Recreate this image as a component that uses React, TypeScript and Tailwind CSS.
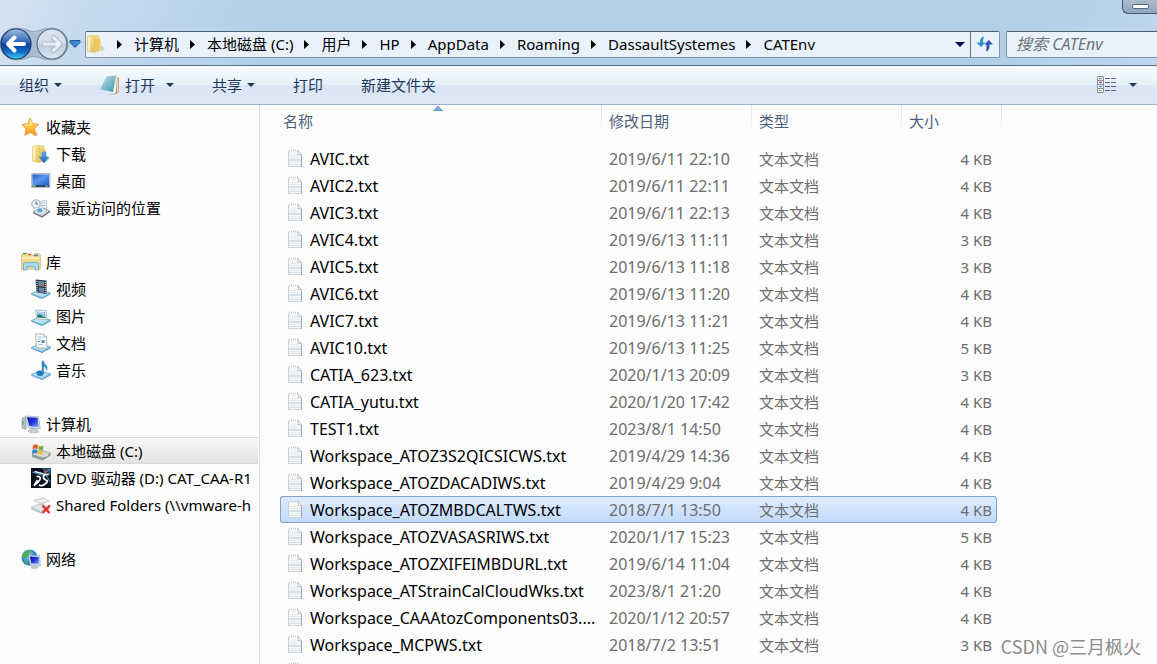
import { ReactNode } from "react"
import cn from "clsx"

interface IFile {
  name: string
  date: string
  size: string
  selected?: boolean
}

interface ITreeItem {
  label: string
  icon: ReactNode
  selected?: boolean
}

interface ITreeGroup extends ITreeItem {
  items: ITreeItem[]
}

const FILES: IFile[] = [
  { name: "AVIC.txt", date: "2019/6/11 22:10", size: "4 KB" },
  { name: "AVIC2.txt", date: "2019/6/11 22:11", size: "4 KB" },
  { name: "AVIC3.txt", date: "2019/6/11 22:13", size: "4 KB" },
  { name: "AVIC4.txt", date: "2019/6/13 11:11", size: "3 KB" },
  { name: "AVIC5.txt", date: "2019/6/13 11:18", size: "3 KB" },
  { name: "AVIC6.txt", date: "2019/6/13 11:20", size: "4 KB" },
  { name: "AVIC7.txt", date: "2019/6/13 11:21", size: "4 KB" },
  { name: "AVIC10.txt", date: "2019/6/13 11:25", size: "5 KB" },
  { name: "CATIA_623.txt", date: "2020/1/13 20:09", size: "3 KB" },
  { name: "CATIA_yutu.txt", date: "2020/1/20 17:42", size: "4 KB" },
  { name: "TEST1.txt", date: "2023/8/1 14:50", size: "4 KB" },
  { name: "Workspace_ATOZ3S2QICSICWS.txt", date: "2019/4/29 14:36", size: "4 KB" },
  { name: "Workspace_ATOZDACADIWS.txt", date: "2019/4/29 9:04", size: "4 KB" },
  { name: "Workspace_ATOZMBDCALTWS.txt", date: "2018/7/1 13:50", size: "4 KB", selected: true },
  { name: "Workspace_ATOZVASASRIWS.txt", date: "2020/1/17 15:23", size: "5 KB" },
  { name: "Workspace_ATOZXIFEIMBDURL.txt", date: "2019/6/14 11:04", size: "4 KB" },
  { name: "Workspace_ATStrainCalCloudWks.txt", date: "2023/8/1 21:20", size: "4 KB" },
  { name: "Workspace_CAAAtozComponents03....", date: "2020/1/12 20:57", size: "4 KB" },
  { name: "Workspace_MCPWS.txt", date: "2018/7/2 13:51", size: "3 KB" },
]

const PATH = ["计算机", "本地磁盘 (C:)", "用户", "HP", "AppData", "Roaming", "DassaultSystemes", "CATEnv"]

const Defs = () => (
  <svg className="absolute h-0 w-0" aria-hidden="true">
    <defs>
      <linearGradient id="back" x1="0" y1="0" x2="0" y2="1">
        <stop offset="0" stopColor="#9fbce0" />
        <stop offset="0.45" stopColor="#2a63b4" />
        <stop offset="0.5" stopColor="#0b3f98" />
        <stop offset="0.75" stopColor="#1268c4" />
        <stop offset="1" stopColor="#3fd2f8" />
      </linearGradient>
      <linearGradient id="forward" x1="0" y1="0" x2="0" y2="1">
        <stop offset="0" stopColor="#dbe5ef" />
        <stop offset="0.48" stopColor="#cfdbe8" />
        <stop offset="0.52" stopColor="#bccbdc" />
        <stop offset="1" stopColor="#dde9f5" />
      </linearGradient>
      <linearGradient id="folder" x1="0" y1="0" x2="1" y2="1">
        <stop offset="0" stopColor="#fff3b8" />
        <stop offset="1" stopColor="#e3bb4e" />
      </linearGradient>
      <linearGradient id="star" x1="0" y1="0" x2="0" y2="1">
        <stop offset="0" stopColor="#ffe36b" />
        <stop offset="0.6" stopColor="#fdbb35" />
        <stop offset="1" stopColor="#f08a1c" />
      </linearGradient>
      <linearGradient id="desktop" x1="0" y1="0" x2="1" y2="1">
        <stop offset="0" stopColor="#2456c4" />
        <stop offset="0.45" stopColor="#5c97f0" />
        <stop offset="1" stopColor="#2160d8" />
      </linearGradient>
      <linearGradient id="monitor" x1="0" y1="0" x2="1" y2="1">
        <stop offset="0" stopColor="#0812a8" />
        <stop offset="0.5" stopColor="#2236d8" />
        <stop offset="1" stopColor="#8fb4ff" />
      </linearGradient>
      <linearGradient id="tray" x1="0" y1="0" x2="1" y2="1">
        <stop offset="0" stopColor="#e5f5fd" />
        <stop offset="1" stopColor="#8ecbea" />
      </linearGradient>
      <linearGradient id="note" x1="0" y1="0" x2="1" y2="1">
        <stop offset="0" stopColor="#b8e4ec" />
        <stop offset="1" stopColor="#3f93ab" />
      </linearGradient>
      <linearGradient id="arrow" x1="0" y1="0" x2="0" y2="1">
        <stop offset="0" stopColor="#5fb0e8" />
        <stop offset="1" stopColor="#1c5fb4" />
      </linearGradient>
      <radialGradient id="globe" cx="0.4" cy="0.35" r="0.7">
        <stop offset="0" stopColor="#9be0f6" />
        <stop offset="0.6" stopColor="#2f8cc8" />
        <stop offset="1" stopColor="#175a98" />
      </radialGradient>
    </defs>
  </svg>
)

const Icon = ({ children }: { children: ReactNode }) => (
  <svg viewBox="0 0 20 20" className="h-5 w-5 shrink-0" aria-hidden="true">
    {children}
  </svg>
)

const Caret = () => (
  <svg viewBox="0 0 8 4" className="h-1 w-2 shrink-0" aria-hidden="true">
    <path d="M0 0h8L4 4z" fill="#1e395b" />
  </svg>
)

const FolderShape = () => (
  <>
    <path d="M15 11l4 4-4 3z" fill="#b9bdbd" opacity="0.6" />
    <path d="M7 1.500l6 .700v14.600L7 18z" fill="#f6dc84" stroke="#d9b95a" strokeWidth="0.500" />
    <path d="M1.500 2.500l5.500-1 1.500 1.500v15.500l-7-1.500z" fill="url(#folder)" stroke="#d9bd68" strokeWidth="0.600" />
    <path d="M9 4l5.500 1v11.500L9 18.500z" fill="#eccb66" />
    <path d="M3 3.500v13" stroke="#fffbe0" strokeWidth="1.200" />
  </>
)

const Tray = () => (
  <>
    <path d="M.5 14.500l8-3.500 11 3-8.500 5z" fill="url(#tray)" stroke="#4f9fc8" strokeWidth="0.800" />
    <path d="M.5 15l10.500 4.300 8.500-5v1L11 20 .5 15.800z" fill="#3f8fbd" />
  </>
)

const StarIcon = () => (
  <Icon>
    <path d="M14 14l4 3-3 2z" fill="#b8b8b8" opacity="0.5" />
    <path
      d="M9.200 1l2.600 5.800 6 .5-4.300 4.300 1.600 7.400-5.600-3.500-5.700 2.800 1.300-6.300L1 7.600l5.800-1z"
      fill="url(#star)"
      stroke="#e29a3a"
      strokeWidth="0.900"
      strokeLinejoin="round"
    />
    <path d="M9.200 2.800l1.700 4.800-7 .9" fill="none" stroke="#fff2a8" strokeWidth="1.200" />
  </Icon>
)

const DownloadIcon = () => (
  <Icon>
    <FolderShape />
    <path d="M11 8h4v5h3l-5 6-5-6h3z" fill="url(#arrow)" stroke="#3b8fd0" strokeWidth="0.600" />
  </Icon>
)

const DesktopIcon = () => (
  <Icon>
    <path d="M.5 2.500h18.500v14H.5z" fill="#c5cbd2" stroke="#9aa6b3" strokeWidth="0.600" />
    <path d="M1.500 3.500h16.500v10.500H1.500z" fill="url(#desktop)" />
    <path d="M1.500 14h16.500v2H1.500z" fill="#2e4258" />
    <path d="M2 14h2.500v2H2z" fill="#55c070" />
    <path d="M14 15h3" stroke="#9fc0e8" />
  </Icon>
)

const RecentIcon = () => (
  <Icon>
    <path d="M7 3.500l8-1 1 8-8 2z" fill="#f3f6f8" stroke="#a8b4be" strokeWidth="0.700" />
    <path d="M10 5h4M10 7.500h4" stroke="#a3b8c8" />
    <circle cx="5" cy="6" r="4.200" fill="#e8eff4" stroke="#98a8b5" />
    <path d="M5 3.500V6h2" fill="none" stroke="#58748a" />
    <path d="M2 14l8-5 9 4-8 5.500z" fill="#d0d5d9" stroke="#7b858d" strokeWidth="0.700" />
    <path d="M5 10.500l6-1 1.500 5-6 .8z" fill="#59a9d0" stroke="#f2f6f8" />
    <path d="M2 14.500l9 4.500 8-5.500" fill="none" stroke="#6d767e" strokeWidth="1.200" />
  </Icon>
)

const LibraryIcon = () => (
  <Icon>
    <path d="M.7 3l1-1.500h5L8 3h5l1-1.500h3.500L19.300 3v14H.7z" fill="#f4dc8c" stroke="#c9a953" strokeWidth="0.700" />
    <path d="M2 1.500h3" stroke="#3caa4c" strokeWidth="1.500" />
    <path d="M7 2.500h3" stroke="#d8452c" strokeWidth="1.300" />
    <path d="M13 3.500h4" stroke="#3587d0" strokeWidth="1.500" />
    <path d="M1.500 6h17" stroke="#fff6cc" strokeWidth="1.500" />
    <path
      d="M2.500 18v-5.500q0-2 2-2h11q2 0 2 2V18h-3.500v-3.500H6V18z"
      fill="#a9dcf2"
      stroke="#5ba6cb"
      strokeWidth="0.800"
    />
  </Icon>
)

const VideoIcon = () => (
  <Icon>
    <Tray />
    <path d="M4.500 0.500l11 1v13.500l-10-1.500z" fill="#3a4047" />
    <path d="M7.500 2l5.500.5v5l-5.500-.5z" fill="#4e93cc" />
    <path d="M8 8.500l5 .5v5l-5-.800z" fill="#458bc4" />
    <path d="M8.500 6l2-2.500L13 6v1.500z" fill="#d0632f" />
    <path d="M8.500 12l2-2 2 3z" fill="#c05a35" />
    <path d="M6 2v11M14.300 3v11" stroke="#e6e9ec" strokeWidth="0.900" strokeDasharray="1 1" />
  </Icon>
)

const PictureIcon = () => (
  <Icon>
    <Tray />
    <path d="M4.500 4l10.500.5 1 9-10.500-.5z" fill="#f4f7f9" stroke="#9fabb5" strokeWidth="0.700" />
    <path d="M6 5.500l8 .4.600 6-8-.3z" fill="#7dbbe6" />
    <path d="M6.500 11.500l-.2-2.500q3-1 4.500 1t3.800.5v1.500z" fill="#24705c" />
    <path d="M7 7q3-1 6 .5" stroke="#cfeaf8" fill="none" />
  </Icon>
)

const DocumentIcon = () => (
  <Icon>
    <Tray />
    <path d="M4.500 1h8l3 3 .5 11.500-10.500-1z" fill="#fafbfc" stroke="#9ba8b3" strokeWidth="0.800" />
    <path d="M12.500 1v3h3" fill="#d5dde3" stroke="#9ba8b3" strokeWidth="0.600" />
    <path d="M6.500 4h4M7 6h3M7 11.500h5" stroke="#a9b6c0" strokeWidth="0.800" />
    <path d="M10.500 7h3v3h-3z" fill="#5a8fb8" />
    <path d="M7 8.500h2" stroke="#7d93a4" />
  </Icon>
)

const MusicIcon = () => (
  <Icon>
    <Tray />
    <ellipse cx="9" cy="13.300" rx="3.500" ry="2.700" fill="#2178bc" />
    <path d="M11 13.500V1h1.500q.5 3 3 4.500 1.500 2 0 5 .3-3-3-4.500v7.500z" fill="#2f8bce" stroke="#2272ae" strokeWidth="0.400" />
  </Icon>
)

const ComputerIcon = () => (
  <Icon>
    <path d="M1 4l4-1.500v13L1 14z" fill="#b8c1c9" stroke="#8c969e" strokeWidth="0.600" />
    <path d="M2 7v4" stroke="#5cae52" strokeWidth="1.200" />
    <path d="M10 14l5 1 3 3-7 1-4-2z" fill="#c9cfd4" stroke="#9aa2a8" strokeWidth="0.500" />
    <path d="M4.500 2l13 .7 1.800 12.300-12-1.500z" fill="#d8e0e8" stroke="#98a4b2" strokeWidth="0.600" />
    <path d="M6 3.200l10.500.6 1.300 9.500-9.500-1.200z" fill="url(#monitor)" />
  </Icon>
)

const DriveIcon = () => (
  <Icon>
    <path d="M1 13.500l8-4.500 10.500 3-7.500 5z" fill="#d5dadc" stroke="#8a9295" strokeWidth="0.700" />
    <path d="M1 13.500v2.500l10.500 3.500 8-5V12l-7.500 5z" fill="#929b9d" />
    <path d="M14 15.500l3-1.500" stroke="#dff0d2" strokeWidth="1.200" />
    <path d="M2 4.500q2.500-1.800 5-.3L6.500 8Q4 6.800 1.500 8.300z" fill="#e55a26" />
    <path d="M7.800 4.700q2 1.300 4.700 0L12 8.500q-2.300 1.200-4.700-.2z" fill="#6db43c" />
    <path d="M1.400 9q2.500-1.500 5-.3L6 12.500q-2.500-1-5 .3z" fill="#3386cc" />
    <path d="M7.200 9.300q2.300 1.300 4.700.2l-.500 3.800q-2.300 1-4.700-.300z" fill="#f4c02e" />
  </Icon>
)

const DiscIcon = () => (
  <Icon>
    <path d="M0 0h20v20H0z" fill="#0b1020" />
    <path d="M10 0h10v7z" fill="#2c4a70" />
    <path d="M1 4l10 3 8-6M14 5l5 9" stroke="#4c84b8" strokeWidth="1.200" fill="none" />
    <path d="M3.500 3.500L13 6" stroke="#dff2ff" strokeWidth="1.500" />
    <path d="M5.500 8.500q5-.5 3.500 3T3 17.500l3.500-5.500" stroke="#fff" strokeWidth="1.700" fill="none" />
    <path d="M18 6.500q-5-.5-5.500 2t2.500 3.500-1 4-6 .8" stroke="#fff" strokeWidth="1.700" fill="none" />
    <path d="M13 2l2 3" stroke="#d74a3a" strokeWidth="1.500" />
  </Icon>
)

const SharedIcon = () => (
  <Icon>
    <path d="M3 5.500l9-2.500 6 3-8 3z" fill="#eceeef" stroke="#b3b8bb" strokeWidth="0.700" />
    <path d="M8 9l5-1.500v4L9 13z" fill="#c8cccf" />
    <path d="M.5 12.500l8-3.500 10 3-8 4.500z" fill="#e4e7e8" stroke="#a7adb0" strokeWidth="0.700" />
    <path d="M.5 13l10 4 8-4.500v1.500l-8 4.500-10-4z" fill="#b5babd" />
    <path d="M11.500 10.500l7 7.500M19 10.500L11.500 18" stroke="#dc3030" strokeWidth="2.400" />
  </Icon>
)

const NetworkIcon = () => (
  <Icon>
    <circle cx="8.500" cy="8.500" r="8" fill="url(#globe)" />
    <path d="M3 3q5-3 7-1L8 5 6 9 2 8.500q-1-3 1-5.500z" fill="#4bb04f" />
    <path d="M3 11l3 1 1 3.500q-3-1-4-4.500z" fill="#59b559" />
    <path d="M13 16l3 1 1 2-5 .7-2.500-1z" fill="#c8ced4" stroke="#9aa2a8" strokeWidth="0.400" />
    <path d="M7.500 6l11 .7.800 10-10.500-1z" fill="#dbe3ea" stroke="#8c9aaa" strokeWidth="0.600" />
    <path d="M9 7.400l8.500.5.600 7.200-8-.8z" fill="url(#monitor)" />
  </Icon>
)

const FileIcon = () => (
  <svg viewBox="0 0 16 19" className="h-[19px] w-4 shrink-0" aria-hidden="true">
    <path d="M1 2h10.500L15 5.500V18H1z" fill="#f5f7f8" />
    <path d="M1.500 2v16M1.500 17.500H14" stroke="#cdd1d4" />
    <path d="M14.500 6v12" stroke="#a4a9ad" />
    <path d="M11 1.500l3.500 4H11z" fill="#fdfdfd" stroke="#b2b7ba" strokeWidth="0.800" />
    <path d="M2 1.500h9" stroke="#c3c8cb" strokeWidth="1.500" strokeDasharray="1 1" />
    <path d="M3 6.500h8M3 8.500h11" stroke="#e4ecf1" />
    <path d="M2 10.500h12M2 11.500h12M2 15.500h12" stroke="#d3e0e9" />
    <path d="M2 13.500h12" stroke="#e4ecf1" />
  </svg>
)

const NotepadIcon = () => (
  <Icon>
    <path d="M14 18l5-1-3 2.500H7z" fill="#a9adab" opacity="0.600" />
    <path d="M16 2l3 1-.5 14-3 1.500z" fill="#b99458" />
    <path d="M6 2.500L17 1.500l-1 15-2 2L0 15z" fill="#f3f6f3" />
    <path d="M6 2.500l10-1-3 15.500L0 14.500z" fill="url(#note)" />
    <path d="M6.500 2L17 1" stroke="#7a8a8e" strokeWidth="1.200" strokeDasharray="1 1" />
    <path d="M17.500 3.500v13" stroke="#efe2c4" strokeWidth="0.800" />
  </Icon>
)

const ViewIcon = () => (
  <svg viewBox="0 0 20 18" className="h-[18px] w-5" aria-hidden="true">
    <path d="M.5 .5h6v16h-6zM.5 4.500h6M.5 8.500h6M.5 12.500h6" fill="#fff" stroke="#8294ab" />
    <path d="M2 2.500h3" stroke="#6fa080" strokeWidth="1.500" />
    <path d="M2 6.500h3" stroke="#e0453a" strokeWidth="1.500" />
    <path d="M2 10.500h3" stroke="#5580d8" strokeWidth="1.500" />
    <path d="M2 14.500h3" stroke="#98c83c" strokeWidth="1.500" />
    <path d="M8 2.500h5M14 2.500h5M8 6.500h5M14 6.500h5M8 10.500h5M14 10.500h5M8 14.500h5M14 14.500h5" stroke="#566a84" />
  </svg>
)

const RefreshIcon = () => (
  <svg viewBox="0 0 18 18" className="h-[18px] w-[18px]" aria-hidden="true">
    <path d="M4 7.500Q4 2 8 1.500q-1 2-1 6h2.500L5 12 .5 7.500z" fill="#2f8ed0" />
    <path d="M13.500 9.500q.5 6-3.500 7 .800-2 .500-7H8.500L12.800 5 17 9.500z" fill="#2a55ae" />
  </svg>
)

const TREE: ITreeGroup[] = [
  {
    label: "收藏夹",
    icon: <StarIcon />,
    items: [
      { label: "下载", icon: <DownloadIcon /> },
      { label: "桌面", icon: <DesktopIcon /> },
      { label: "最近访问的位置", icon: <RecentIcon /> },
    ],
  },
  {
    label: "库",
    icon: <LibraryIcon />,
    items: [
      { label: "视频", icon: <VideoIcon /> },
      { label: "图片", icon: <PictureIcon /> },
      { label: "文档", icon: <DocumentIcon /> },
      { label: "音乐", icon: <MusicIcon /> },
    ],
  },
  {
    label: "计算机",
    icon: <ComputerIcon />,
    items: [
      { label: "本地磁盘 (C:)", icon: <DriveIcon />, selected: true },
      { label: "DVD 驱动器 (D:) CAT_CAA-R1", icon: <DiscIcon /> },
      { label: "Shared Folders (\\\\vmware-h", icon: <SharedIcon /> },
    ],
  },
  { label: "网络", icon: <NetworkIcon />, items: [] },
]

const NavButtons = () => (
  <div className="relative flex w-[85px] shrink-0 items-center">
    <svg viewBox="0 0 70 34" className="absolute left-0 h-[34px] w-[70px]" aria-hidden="true">
      <path
        d="M16 1Q24 1 30 4q4 1 8 0 6-3 14-3a16 16 0 010 32q-8 0-14-3-4-1-8 0-6 3-14 3A16 16 0 0116 1z"
        fill="#a9bdd2"
        stroke="#8ea3b8"
      />
    </svg>
    <button type="button" aria-label="后退" className="relative h-[34px] w-[34px]">
      <svg viewBox="0 0 34 34" aria-hidden="true">
        <circle cx="16" cy="17" r="15" fill="url(#back)" stroke="#1d3d66" strokeWidth="1.200" />
        <path d="M8 17h16M14.500 10.500L8 17l6.500 6.500" fill="none" stroke="#fff" strokeWidth="4" strokeLinejoin="round" strokeLinecap="round" />
      </svg>
    </button>
    <button type="button" aria-label="前进" className="relative h-[34px] w-[34px]">
      <svg viewBox="0 0 34 34" aria-hidden="true">
        <circle cx="18" cy="17" r="15" fill="url(#forward)" stroke="#5d6b7a" strokeWidth="1.200" />
        <path d="M10 17h16M19.500 10.500L26 17l-6.500 6.500" fill="none" stroke="#aebccb" strokeWidth="5" strokeLinejoin="round" strokeLinecap="round" />
        <path d="M10 17h16M19.500 10.500L26 17l-6.500 6.500" fill="none" stroke="#e8eef5" strokeWidth="3" strokeLinejoin="round" strokeLinecap="round" />
      </svg>
    </button>
    <button type="button" aria-label="最近的页面" className="ml-px">
      <svg viewBox="0 0 12 8" className="h-2 w-3" aria-hidden="true">
        <path d="M1 .5h10v2L6 7.500l-5-5z" fill="#3f8bd0" stroke="#1f4f8c" strokeWidth="0.900" />
      </svg>
    </button>
  </div>
)

const AddressBar = () => (
  <div className="flex h-[27px] min-w-0 flex-1 rounded-xs border border-[#8194a8] border-t-[#4e5f70] bg-[#e9f2fa]">
    <nav aria-label="地址" className="flex min-w-0 flex-1 items-center overflow-hidden">
      <Icon>
        <FolderShape />
      </Icon>
      {PATH.map((part) => (
        <div key={part} className="flex shrink-0 items-center">
          <svg viewBox="0 0 5 9" className="mr-3 ml-[11px] h-[9px] w-[5px]" aria-hidden="true">
            <path d="M0 0l5 4.500L0 9z" fill="#000" />
          </svg>
          <a href="#" className="text-black">
            {part}
          </a>
        </div>
      ))}
    </nav>
    <button type="button" aria-label="以前的位置" className="w-5 shrink-0">
      <svg viewBox="0 0 10 5" className="mx-auto h-[5px] w-[10px]" aria-hidden="true">
        <path d="M0 0h10L5 5z" fill="#000050" />
      </svg>
    </button>
    <button
      type="button"
      aria-label="刷新"
      className="flex w-[29px] shrink-0 items-center justify-center border-l border-[#5f7081]"
    >
      <RefreshIcon />
    </button>
  </div>
)

const ToolButton = ({ children }: { children: ReactNode }) => (
  <button type="button" className="flex h-full items-center gap-[5px] text-[#1e395b]">
    {children}
  </button>
)

const Toolbar = () => (
  <div className="flex h-[40px] shrink-0 items-center border-t border-b border-t-[#5c7188] border-b-[#9eb0cb] bg-[linear-gradient(#f7fbff,#e6f0fa_50%,#dbe5f3_50%,#dde7f5)] pr-5 pl-[19px]">
    <div className="flex flex-1 items-center gap-[38px]">
      <ToolButton>
        组织
        <Caret />
      </ToolButton>
      <ToolButton>
        <NotepadIcon />
        打开
        <span className="ml-1.5">
          <Caret />
        </span>
      </ToolButton>
      <ToolButton>
        共享
        <Caret />
      </ToolButton>
      <ToolButton>打印</ToolButton>
      <ToolButton>新建文件夹</ToolButton>
    </div>
    <button type="button" aria-label="更改您的视图" className="flex items-center gap-3">
      <ViewIcon />
      <Caret />
    </button>
  </div>
)

const TreeRow = ({ label, icon, selected, nested }: ITreeItem & { nested?: boolean }) => (
  <a
    href="#"
    className={cn("flex h-[27px] items-center gap-[5px] overflow-hidden border-y whitespace-nowrap text-black", {
      "pl-[31px]": nested,
      "pl-[21px]": !nested,
      "border-[#d9d9d9] bg-linear-to-b from-[#f7f7f7] to-[#e4e4e4]": selected,
      "border-transparent": !selected,
    })}
  >
    {icon}
    <span>{label}</span>
  </a>
)

const Sidebar = () => (
  <aside className="flex w-[260px] shrink-0 flex-col gap-[27px] overflow-hidden border-r border-[#d6e5f5] pt-2 pr-px">
    {TREE.map((group) => (
      <div key={group.label}>
        <TreeRow label={group.label} icon={group.icon} />
        {group.items.map((item) => (
          <TreeRow key={item.label} nested {...item} />
        ))}
      </div>
    ))}
  </aside>
)

const HeadCell = ({ children, colSpan, className }: { children: ReactNode; colSpan?: number; className?: string }) => (
  <th
    colSpan={colSpan}
    className={cn(
      "h-10 bg-[linear-gradient(#d5e2f0,#e3ecf5_50%,transparent)] bg-[length:1px_28px] bg-right-top bg-no-repeat pb-2 text-left font-normal text-[#4c607a]",
      className,
    )}
  >
    {children}
  </th>
)

const FileTable = () => (
  <table className="w-[722px] table-fixed border-separate border-spacing-0">
    <colgroup>
      <col className="w-[322px]" />
      <col className="w-[150px]" />
      <col className="w-[150px]" />
      <col className="w-[95px]" />
      <col className="w-[5px]" />
    </colgroup>
    <thead>
      <tr>
        <HeadCell className="relative pl-[3px]">
          <svg viewBox="0 0 10 5" className="absolute top-px left-[153px] h-[5px] w-[10px]" aria-hidden="true">
            <path d="M0 5l5-5 5 5z" fill="#6fb4d8" stroke="#3c6f90" strokeWidth="0.500" />
          </svg>
          名称
        </HeadCell>
        <HeadCell className="pl-[7px]">修改日期</HeadCell>
        <HeadCell className="pl-[7px]">类型</HeadCell>
        <HeadCell colSpan={2} className="pl-[7px]">
          大小
        </HeadCell>
      </tr>
    </thead>
    <tbody>
      {FILES.map(({ name, date, size, selected }) => {
        const cell = cn("h-[27px] border-y p-0", {
          "border-[#7da2ce] bg-linear-to-b from-[#dfebfc] to-[#c1dbfc]": selected,
          "border-transparent": !selected,
        })
        return (
          <tr key={name} aria-selected={Boolean(selected)} className="text-[#6d6d6d]">
            <td className={cn(cell, "rounded-l-[3px] border-l text-base/5")}>
              <div className="flex items-center gap-[7px] pl-1.5 whitespace-nowrap text-black">
                <FileIcon />
                {name}
              </div>
            </td>
            <td className={cn(cell, "pl-[7px] text-base/5")}>{date}</td>
            <td className={cn(cell, "pl-[7px]")}>文本文档</td>
            <td className={cn(cell, "rounded-r-[3px] border-r pr-1 text-right")}>{size}</td>
            <td />
          </tr>
        )
      })}
      <tr>
        <td className="pt-1 pl-[7px]">
          <FileIcon />
        </td>
      </tr>
    </tbody>
  </table>
)

const App = () => (
  <div className="relative flex h-screen flex-col overflow-hidden bg-[#fcfcfc] font-['Noto_Sans','Noto_Sans_CJK_SC',sans-serif] text-[15px] leading-5">
    <Defs />
    <header className="shrink-0 bg-[#b2cfea] bg-[linear-gradient(115deg,#d5e3f2,#c6daee_8%,#b2cfea_24%,#b2cfea_88%,#c0d7ee)] pb-1">
      <div className="flex h-[27px] items-start justify-end">
        <button
          type="button"
          aria-label="最小化"
          className="flex h-[14px] w-[35px] items-center justify-center rounded-bl-md border-b border-l border-[#44566a] bg-linear-to-b from-[#a9bbce] to-[#90a6be]"
        >
          <span className="h-[5px] w-[17px] rounded-xs border border-[#5b6a7a] bg-white" />
        </button>
      </div>
      <div className="flex h-[34px] items-center gap-1.5">
        <div className="flex min-w-0 flex-1 items-center">
          <NavButtons />
          <AddressBar />
        </div>
        <input
          type="search"
          aria-label="搜索 CATEnv"
          placeholder="搜索 CATEnv"
          className="h-[27px] w-[151px] rounded-l-xs border border-r-0 border-[#8194a8] border-t-[#4e5f70] bg-[#e9f2fa] pl-[9px] text-base/5 italic outline-none placeholder:text-[#707478]"
        />
      </div>
    </header>
    <Toolbar />
    <div className="flex min-h-0 flex-1">
      <Sidebar />
      <main className="min-w-0 flex-1 overflow-hidden pl-5">
        <FileTable />
      </main>
    </div>
    <p className="absolute right-4 bottom-1.5 font-['Noto_Sans_CJK_SC',sans-serif] text-[18px] leading-6 text-[#8c8c8c]">
      CSDN @三月枫火
    </p>
  </div>
)

export default App
